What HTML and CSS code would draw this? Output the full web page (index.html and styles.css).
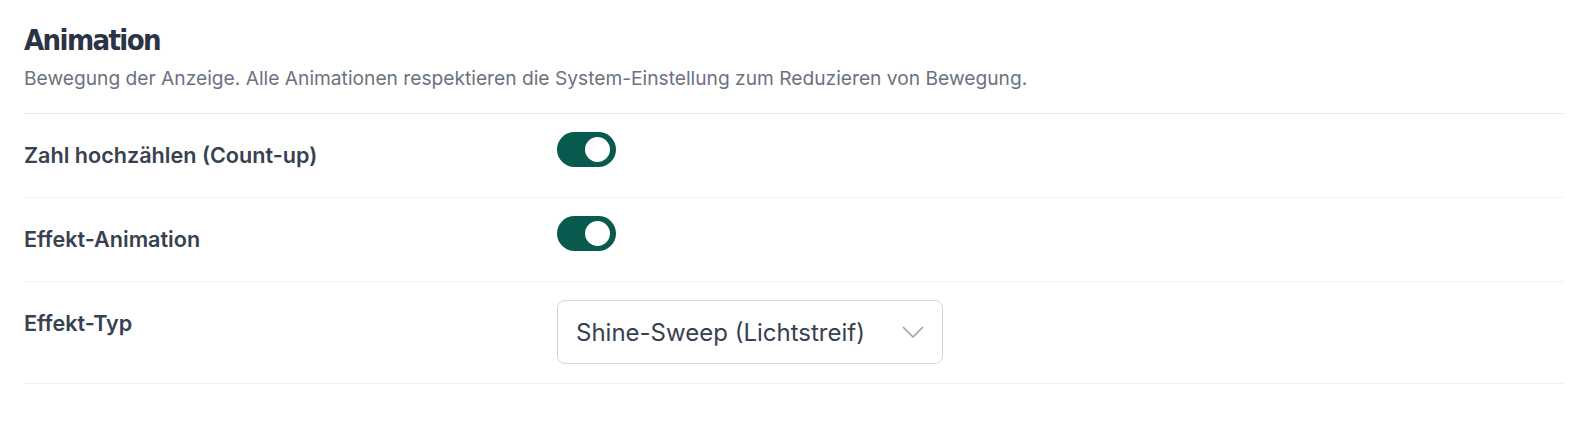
FILE: index.html
```html
<!DOCTYPE html>
<html lang="de">
<head>
	<meta charset="UTF-8">
	<title>Animation</title>
	<link rel="stylesheet" href="styles.css">
</head>
<body>
	<div class="section">
		<div class="head">
			<h2>Animation</h2>
			<p>Bewegung der Anzeige. Alle Animationen respektieren die System-Einstellung zum Reduzieren von Bewegung.</p>
		</div>

		<div class="row">
			<div class="label">Zahl hochzählen (Count-up)</div>
			<div class="control">
				<span class="toggle on"><span class="knob"></span></span>
			</div>
		</div>

		<div class="row">
			<div class="label">Effekt-Animation</div>
			<div class="control">
				<span class="toggle on"><span class="knob"></span></span>
			</div>
		</div>

		<div class="row">
			<div class="label">Effekt-Typ</div>
			<div class="control">
				<div class="select">
					<span>Shine-Sweep (Lichtstreif)</span>
					<svg width="22" height="12" viewBox="0 0 22 12" fill="none" stroke="#9ca3af" stroke-width="1.7" stroke-linecap="round" stroke-linejoin="round"><path d="M1.5 1.5l9.5 9.5 9.5-9.5"/></svg>
				</div>
			</div>
		</div>
	</div>
</body>
</html>
```

FILE: styles.css
```css
/*common*/
*{
	margin: 0;
	padding: 0;
	box-sizing: border-box;
}
body{
	background: #fff;
	font-family: Inter, "Noto Sans", sans-serif;
	color: #374151;
}
.section{
	padding: 0 10px 0 24px;
}

/*header*/
.head{
	padding-top: 22px;
	padding-bottom: 20px;
	border-bottom: 1px solid #e5e7eb;
}
.head h2{
	font-family: "DejaVu Sans Condensed", "DejaVu Sans", sans-serif;
	font-weight: bold;
	font-size: 29px;
	letter-spacing: -1.6px;
	line-height: 36px;
	color: #2b3445;
}
.head p{
	margin-top: 6px;
	font-size: 19.2px;
	line-height: 29px;
	color: #6b7280;
}

/*rows*/
.row{
	display: grid;
	grid-template-columns: 533px 1fr;
	padding: 18px 0 19px;
	border-bottom: 1px solid #f1f2f4;
}
.row .label{
	padding-top: 7px;
	font-size: 21.6px;
	font-weight: 600;
	line-height: 32px;
	color: #374151;
}
.row .control{
	min-height: 46px;
}

/*toggle*/
.toggle{
	display: flex;
	align-items: center;
	justify-content: flex-end;
	width: 59px;
	height: 35px;
	padding: 5px 6px;
	border-radius: 18px;
	background-color: #d1d5db;
}
.toggle.on{
	background-color: #075a4d;
}
.toggle .knob{
	width: 25px;
	height: 25px;
	border-radius: 50%;
	background-color: #fff;
}

/*select*/
.select{
	display: flex;
	align-items: center;
	justify-content: space-between;
	width: 386px;
	height: 64px;
	padding: 0 18px;
	border: 1px solid #d1d5db;
	border-radius: 8px;
	font-size: 24px;
	color: #374151;
}
```
